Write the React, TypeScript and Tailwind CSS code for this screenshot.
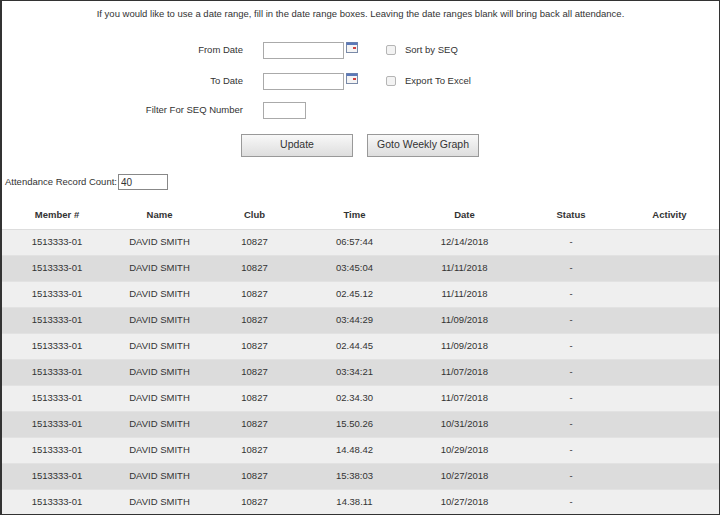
const rows = [
  ["06:57:44", "12/14/2018"],
  ["03:45:04", "11/11/2018"],
  ["02.45.12", "11/11/2018"],
  ["03:44:29", "11/09/2018"],
  ["02.44.45", "11/09/2018"],
  ["03:34:21", "11/07/2018"],
  ["02.34.30", "11/07/2018"],
  ["15.50.26", "10/31/2018"],
  ["14.48.42", "10/29/2018"],
  ["15:38:03", "10/27/2018"],
  ["14.38.11", "10/27/2018"],
];

const cols = ["w-[110px]", "w-[95px]", "w-[95px]", "w-[105px]", "w-[115px]", "w-[98px]", "flex-1"];

function Cal() {
  return (
    <svg width="12" height="11" viewBox="0 0 12 11" className="ml-[2px] -mt-[6px]">
      <rect x="0.5" y="0.5" width="11" height="10" fill="#f4f4f4" stroke="#7a8aa8" />
      <rect x="0.5" y="0.5" width="11" height="2.5" fill="#5b78b8" />
      <rect x="7" y="5" width="3" height="2" fill="#d04040" />
    </svg>
  );
}

function Check({ label }: { label: string }) {
  return (
    <div className="flex items-center gap-[9px] ml-[28px]">
      <span className="w-[10px] h-[10px] border border-[#b5b5b5] bg-[#f3f3f3] rounded-[2px]" />
      <span>{label}</span>
    </div>
  );
}

export default function App() {
  return (
    <div className="w-[720px] h-[515px] overflow-hidden border border-[#333] border-l-2 bg-white text-[9.5px] text-[#333]" style={{ fontFamily: "Arial, 'Liberation Sans', sans-serif" }}>
      <p className="text-center pt-[6px] h-[34px]">
        If you would like to use a date range, fill in the date range boxes. Leaving the date ranges blank will bring back all attendance.
      </p>
      <div className="flex items-center h-[30px]">
        <div className="w-[261px] text-right pr-[20px]">From Date</div>
        <input className="w-[81px] h-[17px] border border-[#aaa]" />
        <Cal />
        <Check label="Sort by SEQ" />
      </div>
      <div className="flex items-center h-[32px]">
        <div className="w-[261px] text-right pr-[20px]">To Date</div>
        <input className="w-[81px] h-[17px] border border-[#aaa]" />
        <Cal />
        <Check label="Export To Excel" />
      </div>
      <div className="flex items-center h-[26px]">
        <div className="w-[261px] text-right pr-[20px]">Filter For SEQ Number</div>
        <input className="w-[43px] h-[17px] border border-[#aaa]" />
      </div>
      <div className="flex gap-[14px] pl-[239px] h-[44px] items-center">
        <button className="w-[112px] h-[23px] border border-[#999] bg-gradient-to-b from-[#f8f8f8] to-[#dedede] text-[10.5px]">Update</button>
        <button className="w-[112px] h-[23px] border border-[#999] bg-gradient-to-b from-[#f8f8f8] to-[#dedede] text-[10.5px]">Goto Weekly Graph</button>
      </div>
      <div className="flex items-center h-[30px] pl-[3px]">
        <span>Attendance Record Count:</span>
        <input defaultValue="40" className="w-[50px] h-[16px] border border-[#888] ml-[1px] px-[2px] text-[10px]" />
      </div>
      <div className="flex items-center pt-[4px] h-[33px] font-bold text-[9.5px] border-b border-[#ddd]">
        {["Member #", "Name", "Club", "Time", "Date", "Status", "Activity"].map((h, i) => (
          <div key={h} className={`${cols[i]} text-center`}>{h}</div>
        ))}
      </div>
      {rows.map(([t, d], r) => (
        <div key={r} className={`flex items-center h-[26px] border-b border-[#e2e2e2] ${r % 2 ? "bg-[#dcdcdc]" : "bg-[#efefef]"}`}>
          {["1513333-01", "DAVID SMITH", "10827", t, d, "-", ""].map((c, i) => (
            <div key={i} className={`${cols[i]} text-center`}>{c}</div>
          ))}
        </div>
      ))}
    </div>
  );
}
